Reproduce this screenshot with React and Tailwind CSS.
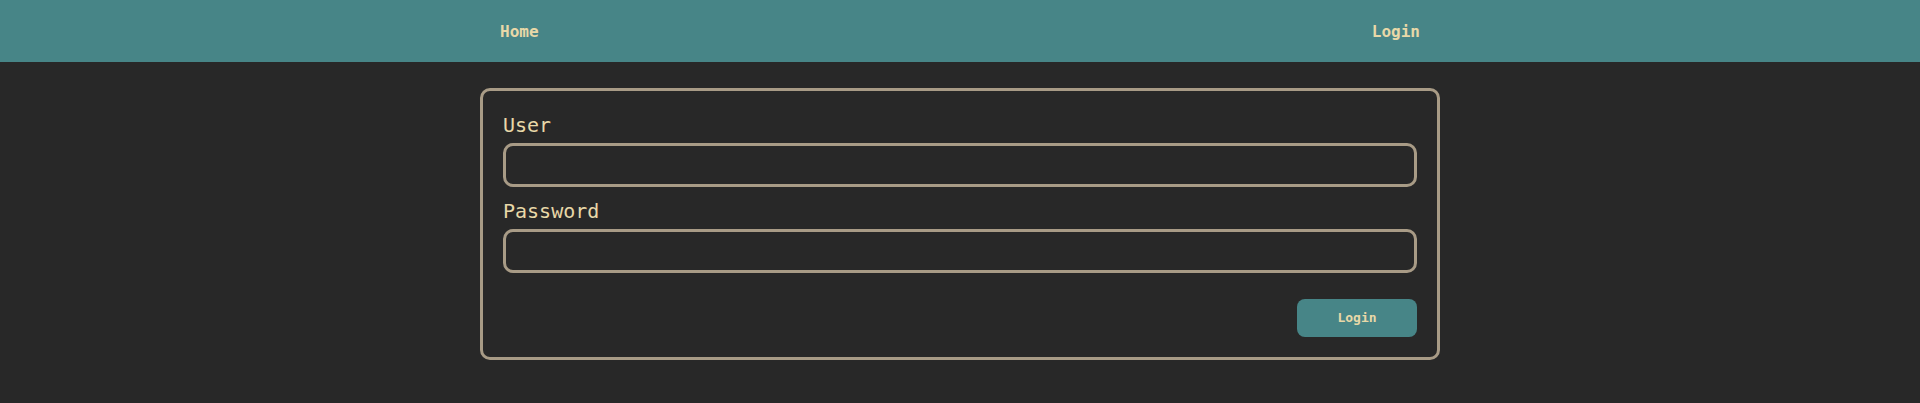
export default function App() {
  return (
    <div className="min-h-screen bg-[#282828] font-['DejaVu_Sans_Mono',monospace] text-[#e8d8a8]">
      <nav className="h-[62px] bg-[#478587]">
        <div className="mx-auto flex h-full max-w-[960px] items-center justify-between px-5 pt-px text-base font-bold">
          <a href="#">Home</a>
          <a href="#">Login</a>
        </div>
      </nav>

      <main className="mx-auto mt-[26px] max-w-[960px]">
        <form className="flex flex-col rounded-[10px] border-[3px] border-[#a89b86] px-5 pt-5 pb-5">
          <label className="mb-1 text-xl leading-7">User</label>
          <input className="h-[44px] rounded-[10px] border-[3px] border-[#a89b86] bg-transparent px-3 text-[#e8d8a8] outline-none" />
          <label className="mt-[10px] mb-1 text-xl leading-7">Password</label>
          <input type="password" className="h-[44px] rounded-[10px] border-[3px] border-[#a89b86] bg-transparent px-3 text-[#e8d8a8] outline-none" />
          <div className="mt-[26px] flex justify-end">
            <button type="button" className="h-[38px] w-[120px] rounded-lg bg-[#478587] text-[13px] font-bold text-[#e8d8a8]">
              Login
            </button>
          </div>
        </form>
      </main>
    </div>
  );
}
